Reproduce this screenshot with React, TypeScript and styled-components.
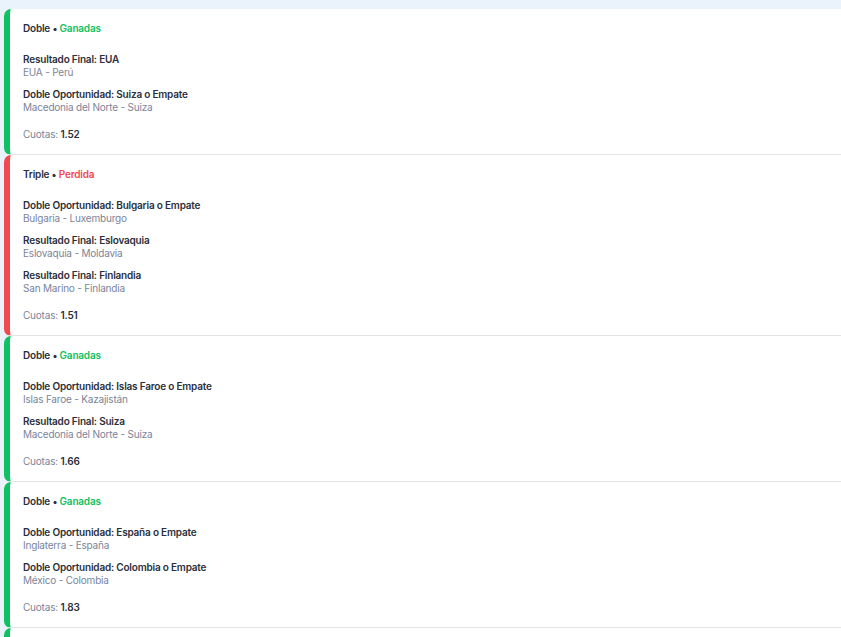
import styled, { createGlobalStyle } from 'styled-components';

type Status = 'won' | 'lost';

interface Selection {
  market: string;
  match: string;
}

interface Bet {
  kind: string;
  status: Status;
  odds: string;
  selections: Selection[];
}

const bets: Bet[] = [
  {
    kind: 'Doble',
    status: 'won',
    odds: '1.52',
    selections: [
      { market: 'Resultado Final: EUA', match: 'EUA - Perú' },
      { market: 'Doble Oportunidad: Suiza o Empate', match: 'Macedonia del Norte - Suiza' },
    ],
  },
  {
    kind: 'Triple',
    status: 'lost',
    odds: '1.51',
    selections: [
      { market: 'Doble Oportunidad: Bulgaria o Empate', match: 'Bulgaria - Luxemburgo' },
      { market: 'Resultado Final: Eslovaquia', match: 'Eslovaquia - Moldavia' },
      { market: 'Resultado Final: Finlandia', match: 'San Marino - Finlandia' },
    ],
  },
  {
    kind: 'Doble',
    status: 'won',
    odds: '1.66',
    selections: [
      { market: 'Doble Oportunidad: Islas Faroe o Empate', match: 'Islas Faroe - Kazajistán' },
      { market: 'Resultado Final: Suiza', match: 'Macedonia del Norte - Suiza' },
    ],
  },
  {
    kind: 'Doble',
    status: 'won',
    odds: '1.83',
    selections: [
      { market: 'Doble Oportunidad: España o Empate', match: 'Inglaterra - España' },
      { market: 'Doble Oportunidad: Colombia o Empate', match: 'México - Colombia' },
    ],
  },
  {
    kind: 'Doble',
    status: 'won',
    odds: '1.70',
    selections: [
      { market: 'Resultado Final: Brasil', match: 'Brasil - Chile' },
      { market: 'Resultado Final: Argentina', match: 'Argentina - Ecuador' },
    ],
  },
];

const statusColor: Record<Status, string> = {
  won: '#0fc162',
  lost: '#f2484f',
};

const statusLabel: Record<Status, string> = {
  won: 'Ganadas',
  lost: 'Perdida',
};

const GlobalStyle = createGlobalStyle`
  html, body {
    margin: 0;
    padding: 0;
    background: #eaf2fb;
    overflow: hidden;
  }
  body {
    font-family: Inter, 'Noto Sans', sans-serif;
    color: #2b2f3a;
  }
`;

const List = styled.div`
  display: flex;
  flex-direction: column;
  padding: 9px 0 0 4px;
`;

const Card = styled.div<{ $status: Status }>`
  display: flex;
  flex-direction: column;
  background: #fff;
  border-left: 6px solid ${(p) => statusColor[p.$status]};
  border-radius: 7px 0 0 7px;
  border-bottom: 1px solid #e4e4e6;
  padding: 13px 13px 13px;
  font-size: 10px;
  line-height: 13px;
  letter-spacing: -0.2px;
`;

const Header = styled.div`
  font-weight: 600;
  margin-bottom: 18px;
`;

const StatusText = styled.span<{ $status: Status }>`
  color: ${(p) => statusColor[p.$status]};
`;

const Selections = styled.div`
  display: flex;
  flex-direction: column;
  gap: 9px;
`;

const Market = styled.div`
  font-weight: 600;
`;

const Match = styled.div`
  color: #7b849a;
`;

const Odds = styled.div`
  margin-top: 14px;
  color: #7b849a;

  strong {
    color: #2b2f3a;
    font-weight: 600;
  }
`;

export default function App() {
  return (
    <>
      <GlobalStyle />
      <List>
        {bets.map((bet, i) => (
          <Card key={i} $status={bet.status}>
            <Header>
              {bet.kind} • <StatusText $status={bet.status}>{statusLabel[bet.status]}</StatusText>
            </Header>
            <Selections>
              {bet.selections.map((s, j) => (
                <div key={j}>
                  <Market>{s.market}</Market>
                  <Match>{s.match}</Match>
                </div>
              ))}
            </Selections>
            <Odds>
              Cuotas: <strong>{bet.odds}</strong>
            </Odds>
          </Card>
        ))}
      </List>
    </>
  );
}
